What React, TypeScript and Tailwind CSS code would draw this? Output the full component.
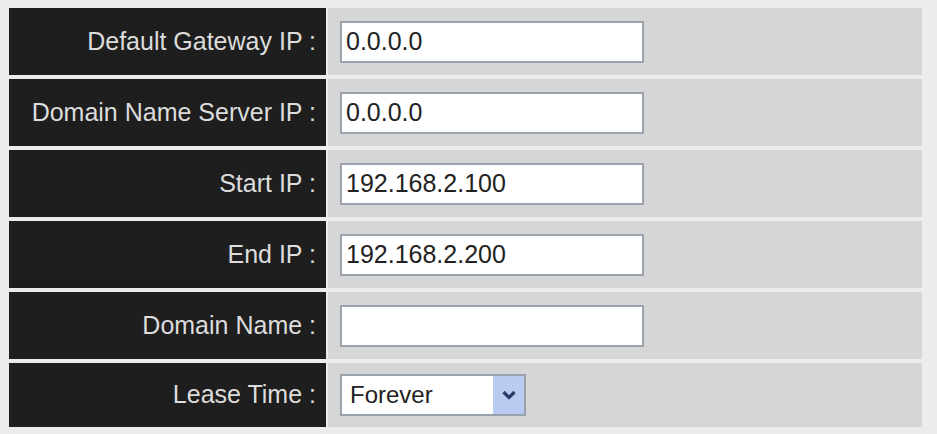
const rows: { label: string; value?: string; select?: boolean }[] = [
  { label: "Default Gateway IP :", value: "0.0.0.0" },
  { label: "Domain Name Server IP :", value: "0.0.0.0" },
  { label: "Start IP :", value: "192.168.2.100" },
  { label: "End IP :", value: "192.168.2.200" },
  { label: "Domain Name :", value: "" },
  { label: "Lease Time :", select: true },
];

export default function App() {
  return (
    <div className="h-[434px] w-[937px] bg-[#ececec] pl-[9px] pt-[8px] font-['Liberation_Sans',Arial,sans-serif]">
      <div className="flex w-[913px] flex-col gap-[4px]">
        {rows.map((row) => (
          <div key={row.label} className={row.select ? "flex h-[64px] gap-[2px]" : "flex h-[67px] gap-[2px]"}>
            <div className="flex w-[317px] items-center justify-end bg-[#1e1e1e] pr-[10px] text-[25px] text-[#dcdcdc]">
              {row.label}
            </div>
            <div className="flex flex-1 items-center bg-[#d6d6d6] pl-[12px]">
              {row.select ? (
                <div className="flex h-[42px] w-[186px] items-center border-2 border-[#9aa3ad] bg-white pl-[8px] text-[24px] text-[#222]">
                  <span className="flex-1">Forever</span>
                  <span className="flex h-full w-[31px] items-center justify-center bg-[#b9cbf0]">
                    <svg width="16" height="12" viewBox="0 0 16 12">
                      <path d="M2.5 3 L8 8.5 L13.5 3" fill="none" stroke="#2a3b66" strokeWidth="3.2" />
                    </svg>
                  </span>
                </div>
              ) : (
                <div className="flex h-[42px] w-[304px] items-center border-2 border-[#9aa3ad] bg-white pl-[4px] text-[25px] text-[#222]">
                  {row.value}
                </div>
              )}
            </div>
          </div>
        ))}
      </div>
    </div>
  );
}
